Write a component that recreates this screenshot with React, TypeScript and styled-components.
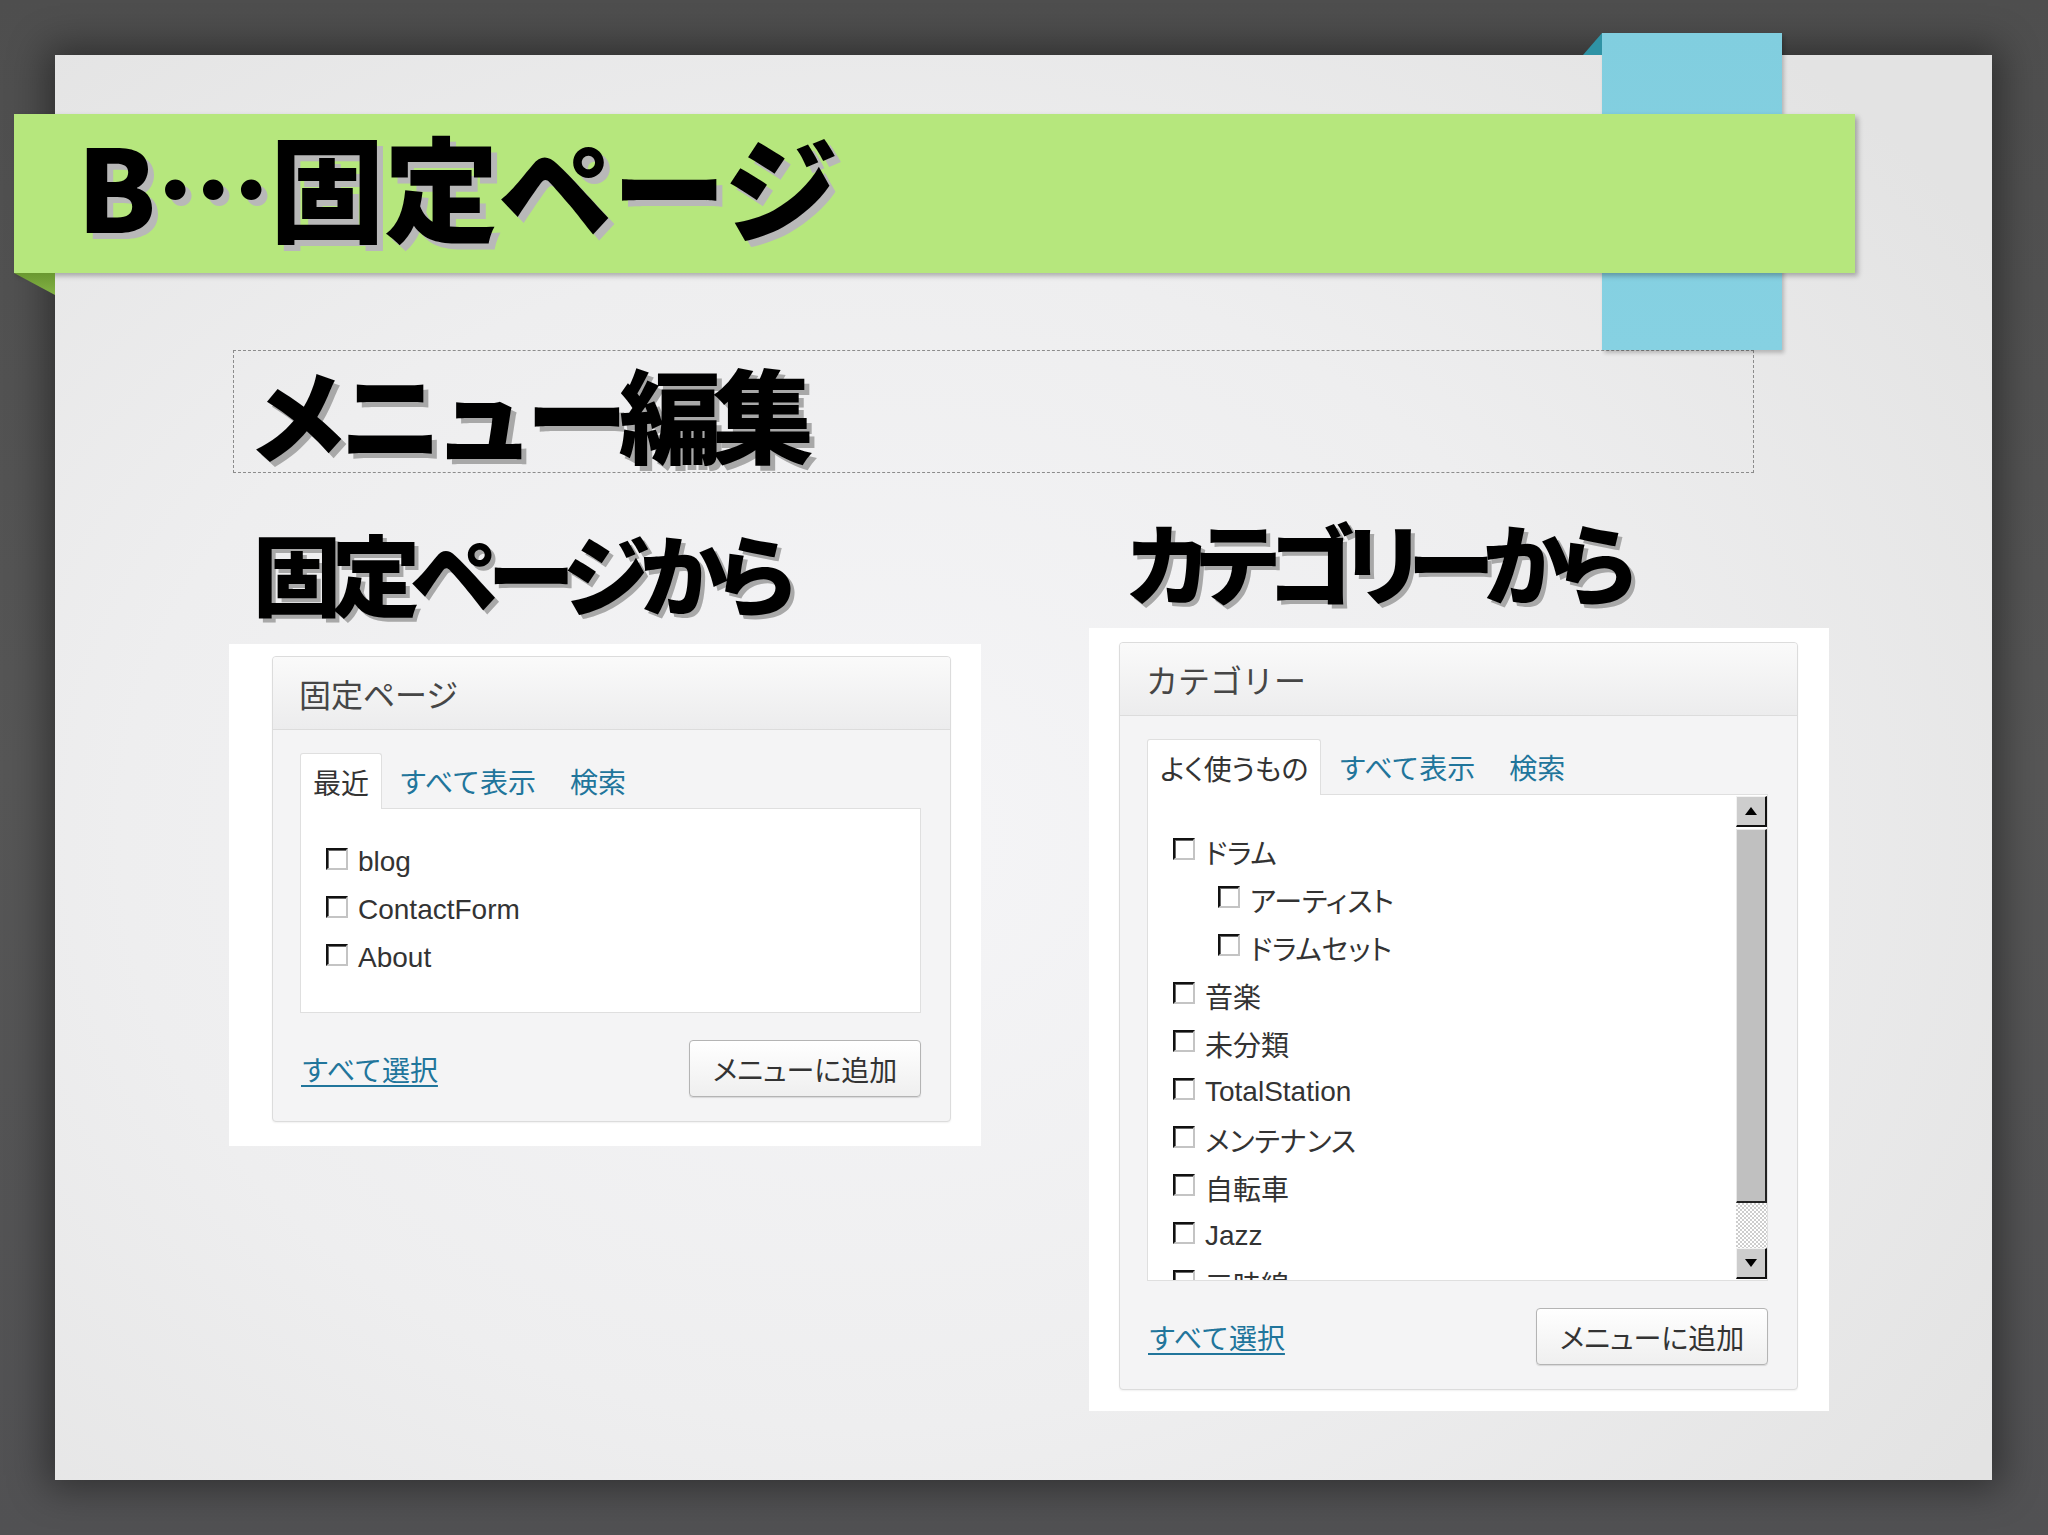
import React from "react";
import styled, { createGlobalStyle } from "styled-components";

const GlobalStyle = createGlobalStyle`
  html, body { margin: 0; padding: 0; }
  body {
    width: 2048px;
    height: 1535px;
    overflow: hidden;
    background: linear-gradient(180deg, #4e4e4e 0%, #565656 50%, #515153 100%);
    font-family: "Liberation Sans", "Noto Sans CJK JP", sans-serif;
  }
`;

const Page = styled.div`
  width: 2048px;
  height: 1535px;
  box-sizing: border-box;
  padding: 55px 0 0 55px;
`;

const Slide = styled.div`
  position: relative;
  width: 1937px;
  height: 1425px;
  display: flex;
  flex-direction: column;
  background: radial-gradient(ellipse 70% 75% at 42% 55%, #f5f5f7 0%, #eeeeef 55%, #e3e3e3 100%);
  box-shadow: 0 0 36px 8px rgba(0, 0, 0, 0.42);
`;

const Ribbon = styled.div`
  position: absolute;
  left: 1547px;
  top: -22px;
  width: 180px;
  height: 317px;
  z-index: 1;
  background: linear-gradient(180deg, #81cedf 0%, #86d1e2 100%);
  box-shadow: 2px 3px 4px rgba(0, 0, 0, 0.22);
`;

const RibbonFold = styled.div`
  position: absolute;
  left: -19px;
  top: 0;
  width: 19px;
  height: 22px;
  background: #2f93a5;
  clip-path: polygon(100% 0, 100% 100%, 0 100%);
`;

const Banner = styled.div`
  position: relative;
  z-index: 2;
  width: 1841px;
  height: 159px;
  margin: 59px 0 0 -41px;
  box-sizing: border-box;
  padding: 13px 0 0 63px;
  background: #b6e77d;
  box-shadow: 3px 3px 5px rgba(0, 0, 0, 0.28);
`;

const BannerFold = styled.div`
  position: absolute;
  left: 0;
  top: 100%;
  width: 41px;
  height: 22px;
  background: linear-gradient(180deg, #6a9830 0%, #84b346 100%);
  clip-path: polygon(0 0, 100% 0, 100% 100%);
`;

const TitleText = styled.h1`
  margin: 0;
  font-family: "Noto Sans CJK JP", sans-serif;
  font-weight: 900;
  font-size: 114px;
  line-height: 1;
  color: #000;
  letter-spacing: 0px;
  text-shadow: 6px 6px 0 #b8b8b8;
`;

const DashedBox = styled.div`
  width: 1521px;
  height: 123px;
  margin: 77px 0 0 178px;
  box-sizing: border-box;
  border: 1px dashed #8c8c8c;
  display: flex;
  align-items: center;
  padding-left: 13px;
`;

const SubTitle = styled.h2`
  margin: 0;
  font-family: "Noto Sans CJK JP", sans-serif;
  font-weight: 900;
  font-size: 102px;
  line-height: 1;
  letter-spacing: -9px;
  color: #000;
  text-shadow: 5px 5px 0 #a8a8a8;
`;

const Columns = styled.div`
  display: grid;
  grid-template-columns: 752px 740px;
  column-gap: 108px;
  align-items: start;
  margin-top: 43px;
  padding-left: 174px;
`;

const Column = styled.div<{ $top: number; $gap: number }>`
  display: flex;
  flex-direction: column;
  align-items: flex-start;
  padding-top: ${(p) => p.$top}px;
  gap: ${(p) => p.$gap}px;
`;

const Heading = styled.h3<{ $indent: number; $spacing: number }>`
  margin: 0;
  padding-left: ${(p) => p.$indent}px;
  font-family: "Noto Sans CJK JP", sans-serif;
  font-weight: 900;
  font-size: 88px;
  line-height: 1;
  letter-spacing: ${(p) => p.$spacing}px;
  color: #000;
  text-shadow: 4px 4px 0 #a8a8a8;
  font-feature-settings: "palt";
`;

const Shot = styled.div<{ $pad: string; $w: number }>`
  width: ${(p) => p.$w}px;
  box-sizing: border-box;
  padding: ${(p) => p.$pad};
  background: #fff;
`;

const Postbox = styled.div`
  width: 679px;
  box-sizing: border-box;
  border: 1px solid #dcdcdc;
  border-radius: 4px;
  background: #f4f4f5;
  box-shadow: 0 1px 2px rgba(0, 0, 0, 0.06);
  overflow: hidden;
`;

const BoxHeader = styled.div`
  height: 73px;
  box-sizing: border-box;
  display: flex;
  align-items: center;
  padding-left: 26px;
  border-bottom: 1px solid #dcdcdc;
  background: linear-gradient(180deg, #fafafa 0%, #ececed 100%);
  font-family: "Noto Sans CJK JP", sans-serif;
  font-size: 32px;
  color: #464646;
`;

const BoxBody = styled.div`
  padding: 23px 29px 24px 27px;
`;

const Tabs = styled.div`
  display: flex;
  align-items: stretch;
  height: 55px;
  position: relative;
  z-index: 1;
`;

const ActiveTab = styled.div`
  display: flex;
  align-items: center;
  padding: 0 12px;
  margin-bottom: -1px;
  background: #fff;
  border: 1px solid #dfdfdf;
  border-bottom: none;
  border-radius: 3px 3px 0 0;
  font-family: "Noto Sans CJK JP", sans-serif;
  font-size: 28px;
  color: #333;
  font-feature-settings: "palt";
`;

const TabLink = styled.a`
  display: flex;
  align-items: center;
  padding: 0 17px;
  font-family: "Noto Sans CJK JP", sans-serif;
  font-size: 28px;
  color: #21759b;
  text-decoration: none;
`;

const Panel = styled.div<{ $h: number }>`
  height: ${(p) => p.$h}px;
  box-sizing: border-box;
  display: flex;
  background: #fff;
  border: 1px solid #dfdfdf;
  overflow: hidden;
`;

const List = styled.ul<{ $top: number }>`
  flex: 1;
  margin: 0;
  list-style: none;
  padding: ${(p) => p.$top}px 0 0 25px;
  display: flex;
  flex-direction: column;
`;

const Item = styled.li<{ $level: number }>`
  flex-shrink: 0;
  height: 48px;
  display: flex;
  align-items: center;
  gap: 10px;
  padding-left: ${(p) => p.$level * 45}px;
  font-size: 28px;
  color: #333;
  font-feature-settings: "palt";
`;

const Check = styled.span`
  flex-shrink: 0;
  width: 22px;
  height: 22px;
  box-sizing: border-box;
  background: #fff;
  border-style: solid;
  border-width: 2px;
  border-color: #111 #c4c4c4 #c4c4c4 #111;
  box-shadow: inset 1px 1px 0 #6a6a6a;
`;

const Label = styled.span`
  padding-top: 6px;
`;

const Scrollbar = styled.div`
  width: 31px;
  flex-shrink: 0;
  display: flex;
  flex-direction: column;
  padding: 1px 0;
  box-sizing: border-box;
`;

const ScrollButton = styled.div`
  height: 31px;
  flex-shrink: 0;
  box-sizing: border-box;
  display: flex;
  align-items: center;
  justify-content: center;
  background: #cdcdcd;
  border-top: 1px solid #f2f2f2;
  border-left: 1px solid #f2f2f2;
  border-right: 2px solid #111;
  border-bottom: 2px solid #111;
`;

const Thumb = styled.div`
  height: 374px;
  flex-shrink: 0;
  box-sizing: border-box;
  margin-top: 2px;
  background: #c0c0c0;
  border-top: 1px solid #e8e8e8;
  border-left: 1px solid #e8e8e8;
  border-right: 2px solid #222;
  border-bottom: 2px solid #222;
`;

const Track = styled.div`
  flex: 1;
  background: repeating-conic-gradient(#cdcdcd 0 25%, #ffffff 0 50%) 0 0 / 4px 4px;
`;

const Footer = styled.div`
  margin-top: 27px;
  display: flex;
  align-items: center;
  justify-content: space-between;
`;

const SelectAll = styled.a`
  margin-left: 1px;
  font-family: "Noto Sans CJK JP", sans-serif;
  font-size: 28px;
  color: #21759b;
  text-decoration: underline;
  text-underline-offset: 4px;
`;

const AddButton = styled.button`
  width: 232px;
  height: 57px;
  box-sizing: border-box;
  border: 1px solid #b4b4b4;
  border-radius: 4px;
  background: linear-gradient(180deg, #ffffff 0%, #efefef 100%);
  box-shadow: 0 1px 1px rgba(0, 0, 0, 0.12);
  font-family: "Noto Sans CJK JP", sans-serif;
  font-size: 28px;
  color: #333;
  padding: 0;
  font-feature-settings: "palt";
`;

const Arrow = ({ up }: { up: boolean }) => (
  <svg width="12" height="8" viewBox="0 0 12 8">
    <polygon points={up ? "6,0 12,8 0,8" : "0,0 12,0 6,8"} fill="#000" />
  </svg>
);

type Entry = { label: string; level: number };

const pages: Entry[] = [
  { label: "blog", level: 0 },
  { label: "ContactForm", level: 0 },
  { label: "About", level: 0 },
];

const categories: Entry[] = [
  { label: "ドラム", level: 0 },
  { label: "アーティスト", level: 1 },
  { label: "ドラムセット", level: 1 },
  { label: "音楽", level: 0 },
  { label: "未分類", level: 0 },
  { label: "TotalStation", level: 0 },
  { label: "メンテナンス", level: 0 },
  { label: "自転車", level: 0 },
  { label: "Jazz", level: 0 },
  { label: "三味線", level: 0 },
];

const Entries = ({ items }: { items: Entry[] }) => (
  <>
    {items.map((e) => (
      <Item key={e.label} $level={e.level}>
        <Check />
        <Label>{e.label}</Label>
      </Item>
    ))}
  </>
);

export default function App() {
  return (
    <>
      <GlobalStyle />
      <Page lang="ja">
        <Slide>
          <Ribbon>
            <RibbonFold />
          </Ribbon>
          <Banner>
            <BannerFold />
            <TitleText>B…固定ページ</TitleText>
          </Banner>
          <DashedBox>
            <SubTitle>メニュー編集</SubTitle>
          </DashedBox>
          <Columns>
            <Column $top={11} $gap={29}>
              <Heading $indent={24} $spacing={-9}>
                固定ページから
              </Heading>
              <Shot $w={752} $pad="12px 30px 24px 43px">
                <Postbox>
                  <BoxHeader>固定ページ</BoxHeader>
                  <BoxBody>
                    <Tabs>
                      <ActiveTab>最近</ActiveTab>
                      <TabLink href="#">すべて表示</TabLink>
                      <TabLink href="#">検索</TabLink>
                    </Tabs>
                    <Panel $h={205}>
                      <List $top={26}>
                        <Entries items={pages} />
                      </List>
                    </Panel>
                    <Footer>
                      <SelectAll href="#">すべて選択</SelectAll>
                      <AddButton>メニューに追加</AddButton>
                    </Footer>
                  </BoxBody>
                </Postbox>
              </Shot>
            </Column>
            <Column $top={0} $gap={24}>
              <Heading $indent={38} $spacing={-11}>
                カテゴリーから
              </Heading>
              <Shot $w={740} $pad="14px 31px 21px 30px">
                <Postbox>
                  <BoxHeader>カテゴリー</BoxHeader>
                  <BoxBody>
                    <Tabs>
                      <ActiveTab>よく使うもの</ActiveTab>
                      <TabLink href="#">すべて表示</TabLink>
                      <TabLink href="#">検索</TabLink>
                    </Tabs>
                    <Panel $h={487}>
                      <List $top={30}>
                        <Entries items={categories} />
                      </List>
                      <Scrollbar>
                        <ScrollButton>
                          <Arrow up />
                        </ScrollButton>
                        <Thumb />
                        <Track />
                        <ScrollButton>
                          <Arrow up={false} />
                        </ScrollButton>
                      </Scrollbar>
                    </Panel>
                    <Footer>
                      <SelectAll href="#">すべて選択</SelectAll>
                      <AddButton>メニューに追加</AddButton>
                    </Footer>
                  </BoxBody>
                </Postbox>
              </Shot>
            </Column>
          </Columns>
        </Slide>
      </Page>
    </>
  );
}
